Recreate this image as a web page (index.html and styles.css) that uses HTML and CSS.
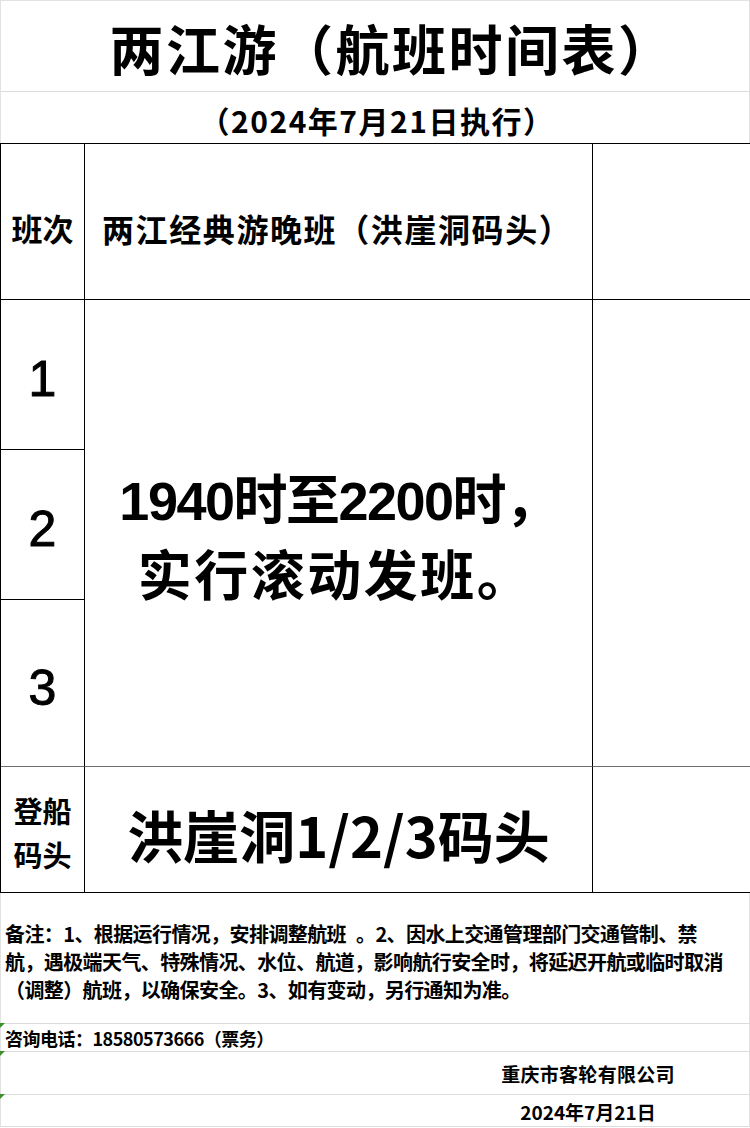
FILE: index.html
```html
<!DOCTYPE html>
<html lang="zh-CN">
<head>
<meta charset="utf-8">
<title>两江游（航班时间表）</title>
<link rel="stylesheet" href="styles.css">
</head>
<body>
<div class="sheet">
  <div class="row title-row"><h1 class="title">两江游（航班时间表）</h1></div>
  <div class="row sub-row"><p class="subtitle">（2024年7月21日执行）</p></div>

  <div class="grid">
    <div class="cell head-label">班次</div>
    <div class="cell head-name">两江经典游晚班（洪崖洞码头）</div>
    <div class="cell head-extra"></div>

    <div class="cell num r1">1</div>
    <div class="cell main-time">
      <p class="time-text"><span class="time-line1">1940时至2200时，</span><br><span class="time-line2">实行滚动发班。</span></p>
    </div>
    <div class="cell side-blank"></div>
    <div class="cell num r2">2</div>
    <div class="cell num r3 gray-bottom">3</div>

    <div class="cell board-label">登船<br>码头</div>
    <div class="cell board-name">洪崖洞1/2/3码头</div>
    <div class="cell board-extra"></div>
  </div>

  <div class="row notes-row">
    <p class="notes">备注：1、根据运行情况，安排调整航班<span class="gap"></span>。2、因水上交通管理部门交通管制、禁<br>航，遇极端天气、特殊情况、水位、航道，影响航行安全时，将延迟开航或临时取消<br>（调整）航班，以确保安全。3、如有变动，另行通知为准。</p>
  </div>
  <div class="row phone-row"><span class="flag"></span><p class="phone">咨询电话：18580573666（票务）</p></div>
  <div class="row company-row"><span class="flag"></span><p class="company">重庆市客轮有限公司</p></div>
  <div class="row date-row"><span class="flag"></span><p class="date">2024年7月21日</p></div>
</div>
</body>
</html>
```

FILE: styles.css
```css
* { box-sizing: border-box; margin: 0; padding: 0; }

html, body {
  background: #ffffff;
}

body {
  width: 750px;
  height: 1128px;
  overflow: hidden;
  font-family: "Noto Sans CJK SC", "Noto Sans", sans-serif;
  color: #000;
}

.sheet {
  width: 750px;
  border-left: 1px solid #e2e2e2;
  border-top: 1px solid #e2e2e2;
}

.row {
  position: relative;
  display: flex;
  align-items: center;
  border-bottom: 1px solid #dcdcdc;
  border-right: 1px solid #e2e2e2;
}

.title-row {
  height: 91px;
  justify-content: center;
}

.title {
  font-size: 54px;
  font-weight: 700;
  line-height: 1;
  letter-spacing: 2.5px;
  padding-left: 34px;
  padding-top: 4px;
}

.sub-row {
  height: 51px;
  border-bottom: none;
  justify-content: center;
}

.subtitle {
  font-size: 30px;
  font-weight: 700;
  line-height: 1;
  letter-spacing: 1.5px;
  padding-top: 4px;
  padding-left: 4px;
}

/* ---------- schedule table ---------- */
.grid {
  display: grid;
  grid-template-columns: 84px 508px 158px;
  grid-template-rows: 156px 150px 150px 167px 126px;
  border-top: 1px solid #000;
  border-left: 1px solid #000;
  margin-left: -1px;
}

.cell {
  border-right: 1px solid #000;
  border-bottom: 1px solid #000;
  display: flex;
  align-items: center;
  justify-content: center;
  font-weight: 700;
}

.head-label {
  font-size: 31px;
  padding-top: 12px;
}

.head-name {
  justify-content: flex-start;
  font-size: 32px;
  letter-spacing: 1.6px;
  padding-left: 17px;
  padding-top: 12px;
}

.num {
  font-family: "Liberation Sans", "Noto Sans CJK SC", sans-serif;
  font-weight: 400;
  font-size: 50px;
  -webkit-text-stroke: 1px #000;
}

.r1 { grid-column: 1; grid-row: 2; padding-top: 8px; }
.r2 { grid-column: 1; grid-row: 3; padding-top: 8px; }
.r3 { grid-column: 1; grid-row: 4; padding-top: 10px; }

.main-time {
  grid-column: 2;
  grid-row: 2 / 5;
  padding-top: 12px;
}

.side-blank {
  grid-column: 3;
  grid-row: 2 / 5;
}

.gray-bottom,
.main-time,
.side-blank {
  border-bottom-color: #6e6e6e;
}

.time-text {
  font-family: "Liberation Sans", "Noto Sans CJK SC", sans-serif;
  font-size: 54px;
  font-weight: 700;
  line-height: 76px;
  text-align: center;
}

.time-line1 {
  letter-spacing: -1.5px;
  margin-left: 0;
}

.time-line2 {
  letter-spacing: 2.5px;
  margin-left: -6px;
}

.board-label {
  font-size: 29px;
  line-height: 44px;
  text-align: center;
  padding-top: 4px;
}

.board-name {
  font-size: 56px;
  padding-top: 8px;
  padding-left: 0;
}

/* ---------- notes ---------- */
.notes-row {
  height: 131px;
  padding-left: 4px;
  padding-top: 8px;
  border-top: none;
}

.notes {
  font-size: 20px;
  font-weight: 700;
  line-height: 28px;
  letter-spacing: -0.6px;
  white-space: nowrap;
}

.gap {
  display: inline-block;
  width: 10px;
}

.phone-row {
  height: 28px;
  padding-left: 4px;
}

.phone {
  font-size: 18px;
  font-weight: 700;
  letter-spacing: -0.5px;
}

.company-row {
  height: 43px;
  padding-left: 426px;
}

.date-row {
  height: 32px;
  padding-left: 426px;
}

.company,
.date {
  width: 324px;
  text-align: center;
  font-size: 19px;
  font-weight: 700;
}

.company {
  letter-spacing: 0.3px;
}

.date {
  padding-top: 2px;
}

.flag {
  position: absolute;
  left: -1px;
  top: -1px;
  width: 0;
  height: 0;
  border-top: 5px solid #3c8f2c;
  border-right: 5px solid transparent;
}
```
